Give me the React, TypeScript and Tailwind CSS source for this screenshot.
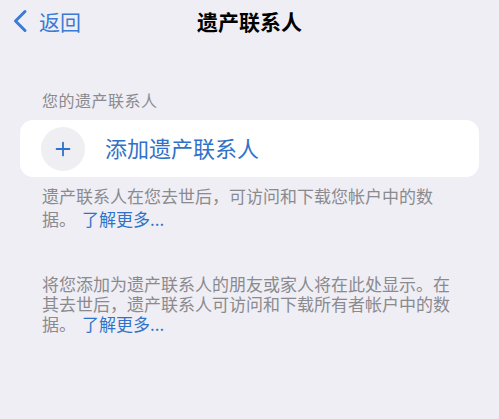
import { Plus } from "lucide-react";

const FONT = "font-['Noto_Sans_CJK_SC','Noto_Sans',sans-serif]";

function NavBar() {
    return (
        <div className="grid h-[42px] grid-cols-[1fr_auto_1fr] items-center">
            <div className="flex items-center pl-[12px] text-[#3a7bd5]">
                <svg width="16" height="24" viewBox="0 0 16 24" fill="none">
                    <path d="M13 2.5 L3.5 12 L13 21.5" stroke="currentColor" strokeWidth="3" strokeLinecap="round" strokeLinejoin="round" />
                </svg>
                <span className="ml-[11px] text-[21px] leading-none">返回</span>
            </div>
            <div className="text-[21px] font-bold leading-none text-black">遗产联系人</div>
            <div />
        </div>
    );
}

function LearnMore() {
    return <span className="ml-[6px] text-[#3072c9]">了解更多...</span>;
}

export default function App() {
    return (
        <div className={`h-[419px] w-full overflow-hidden bg-[#efeef4] ${FONT}`}>
            <NavBar />

            <div className="mt-[48px] pl-[42px] text-[16px] leading-[20px] tracking-[0.5px] text-[#8a8a8f]">
                您的遗产联系人
            </div>

            <div className="mx-[20px] mt-[10px] flex h-[57px] items-center rounded-[13px] bg-white pl-[21px]">
                <div className="flex h-[44px] w-[44px] items-center justify-center rounded-full bg-[#efeef3] text-[#3072c9]">
                    <Plus size={22} strokeWidth={2} />
                </div>
                <span className="ml-[20px] pb-[4px] text-[22px] leading-none text-[#3072c9]">添加遗产联系人</span>
            </div>

            <p className="mt-[7px] pl-[42px] text-[17px] leading-[23px] text-[#8a8a8f]">
                遗产联系人在您去世后，可访问和下载您帐户中的数
                <br />
                据。<LearnMore />
            </p>

            <p className="mt-[44px] pl-[42px] text-[17px] leading-[20px] text-[#8a8a8f]">
                将您添加为遗产联系人的朋友或家人将在此处显示。在
                <br />
                其去世后，遗产联系人可访问和下载所有者帐户中的数
                <br />
                据。<LearnMore />
            </p>
        </div>
    );
}
